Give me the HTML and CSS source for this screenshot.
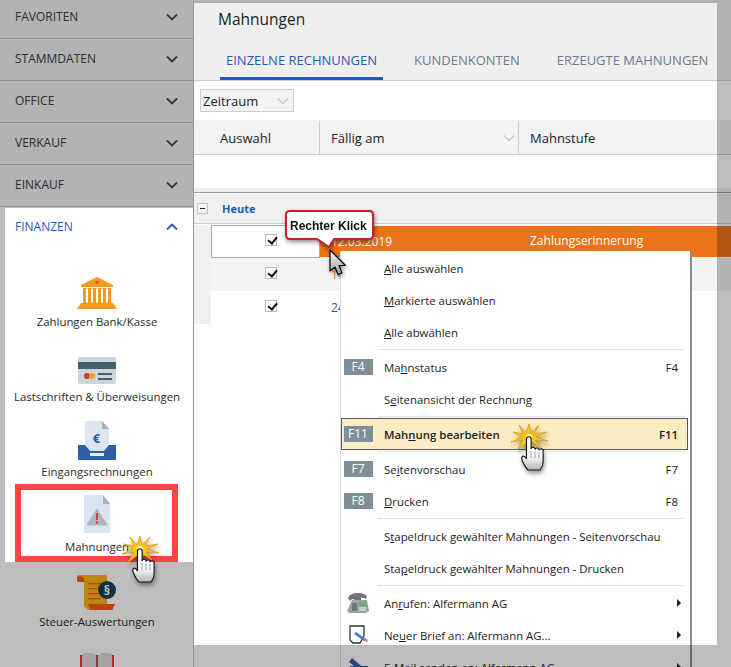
FILE: index.html
```html
<!DOCTYPE html>
<html lang="de">
<head>
<meta charset="utf-8">
<title>Mahnungen</title>
<link rel="stylesheet" href="styles.css">
</head>
<body>
<svg class="defs" width="0" height="0">
  <defs>
    <linearGradient id="handfill" x1="0" y1="0" x2="0" y2="1"><stop offset="0.55" stop-color="#fff"/><stop offset="1" stop-color="#b5b5b5"/></linearGradient>
    <linearGradient id="arrowfill" x1="0" y1="0" x2="0" y2="1"><stop offset="0" stop-color="#fff"/><stop offset="1" stop-color="#999"/></linearGradient>
    <symbol id="hand" viewBox="0 0 40 50">
      <polygon points="18,0 20,9 28,1 23,10 36,8 25,13 37,17 24,16 30,24 21,18 19,27 16,19 6,26 12,16 0,18 11,13 2,8 12,10 8,1 15,9" fill="#f6c51f" stroke="#d99a0e" stroke-width=".7"/>
      <circle cx="18" cy="13" r="3" fill="#fff3b0"/>
      <path d="M15.500 15a2.300 2.300 0 0 1 4.600 0V25a2 2 0 0 1 4 .6a2 2 0 0 1 4 .8a2 2 0 0 1 4 1V38q0 4-3 8H17q-3-3-6-10q-1-3 1-4q2 0 3.500 3Z" fill="url(#handfill)" stroke="#111" stroke-width="1.100"/>
      <path d="M20 27v7M24 27v7M28 28v6" stroke="#777" stroke-width=".7" fill="none"/>
    </symbol>
  </defs>
</svg>
<div class="page">
  <aside class="sidebar">
    <div class="acc"><span>FAVORITEN</span><svg class="chev" viewBox="0 0 12 8"><path d="M1 1.500 6 6.500 11 1.500"/></svg></div>
    <div class="acc"><span>STAMMDATEN</span><svg class="chev" viewBox="0 0 12 8"><path d="M1 1.500 6 6.500 11 1.500"/></svg></div>
    <div class="acc"><span>OFFICE</span><svg class="chev" viewBox="0 0 12 8"><path d="M1 1.500 6 6.500 11 1.500"/></svg></div>
    <div class="acc"><span>VERKAUF</span><svg class="chev" viewBox="0 0 12 8"><path d="M1 1.500 6 6.500 11 1.500"/></svg></div>
    <div class="acc"><span>EINKAUF</span><svg class="chev" viewBox="0 0 12 8"><path d="M1 1.500 6 6.500 11 1.500"/></svg></div>
    <section class="panel">
      <div class="panel-head"><span>FINANZEN</span><svg class="chev up" viewBox="0 0 12 8"><path d="M1 6.500 6 1.500 11 6.500"/></svg></div>
      <div class="tile">
        <svg class="tile-icon" viewBox="0 0 40 42">
          <path d="M20 7 36 15V17H4V15Z" fill="#f49a22"/><circle cx="20" cy="12.500" r="1.800" fill="#e2571e"/>
          <path d="M6 18h28v15H6z" fill="#f49a22"/>
          <path d="M9 18.500h2v14H9zM14 18.500h2v14h-2zM19 18.500h2v14h-2zM24 18.500h2v14h-2zM29 18.500h2v14h-2z" fill="#fff"/>
          <path d="M4 33h32l4 6H0z" fill="#f49a22"/>
        </svg>
        <span class="tile-label">Zahlungen Bank/Kasse</span>
      </div>
      <div class="tile">
        <svg class="tile-icon" viewBox="0 0 40 42">
          <rect x="1" y="12" width="38" height="27" rx="2" fill="#c9d6dc"/>
          <rect x="1" y="17" width="38" height="7" fill="#44616a"/>
          <circle cx="10" cy="31" r="3" fill="#d9341f"/><circle cx="15" cy="31" r="3" fill="#f4a020"/>
          <path d="M21 28h14v2H21zM21 33h14v2H21z" fill="#44616a"/>
        </svg>
        <span class="tile-label">Lastschriften &amp; Überweisungen</span>
      </div>
      <div class="tile">
        <svg class="tile-icon" viewBox="0 0 40 42">
          <path d="M8 1H25L32 8V27L27 31H13L8 27Z" fill="#dde5f0"/>
          <path d="M25 1 32 9H25Z" fill="#a3b3bc"/>
          <text x="19.500" y="23" class="euro">€</text>
          <path d="M1 25H8L13 31H27L32 25H39V40H1Z" fill="#2c5fa8"/>
          <rect x="13" y="33" width="14" height="3" fill="#e8eef5"/>
        </svg>
        <span class="tile-label">Eingangsrechnungen</span>
      </div>
      <div class="tile">
        <svg class="tile-icon" viewBox="0 0 40 42">
          <path d="M7 0H26L33 8V38H7Z" fill="#dbe5f2"/>
          <path d="M26 0 33 9H26Z" fill="#a3b3bc"/>
          <path d="M20 14 30 30H10Z" fill="#aab7c0" stroke="#aab7c0" stroke-linejoin="round"/>
          <path d="M19 18h2v7h-2zM19 26.500h2v2h-2z" fill="#e2323a"/>
        </svg>
        <span class="tile-label">Mahnungen</span>
      </div>
      <div class="tile">
        <svg class="tile-icon" viewBox="0 0 40 42">
          <path d="M0 6q0-1 2-1H28q2 0 2 2V34H38L35 40H11L7 36V12H2Q0 12 0 10Z" fill="#ffb511"/>
          <path d="M11 34H38L35 40H13Z" fill="#f55d10"/>
          <path d="M0 7q4-2 7 1v4H2Q0 12 0 10Z" fill="#f55d10"/>
          <path d="M11 13h13v1.300H11zM11 18h9v1.300h-9zM11 23h10v1.300H11zM11 28h13v1.300H11z" fill="#f55d10"/>
          <circle cx="30" cy="20" r="9" fill="#18415a"/>
          <text x="30" y="24.500" class="para">§</text>
        </svg>
        <span class="tile-label">Steuer-Auswertungen</span>
      </div>
      <div class="tile">
        <svg class="tile-icon" viewBox="0 0 40 42">
          <path d="M3 10H37V40H3Z" fill="#f9303a"/>
          <path d="M5 9q8-3 14 1V38q-6-4-14-1ZM35 9q-8-3-14 1V38q6-4 14-1Z" fill="#dcdcdc"/>
          <path d="M19 10h2v28h-2z" fill="#a55"/>
        </svg>
        <span class="tile-label">Bücher</span>
      </div>
    </section>
  </aside>

  <main class="main">
    <header class="header">
      <h1 class="title">Mahnungen</h1>
      <nav class="tabs">
        <a class="tab active">EINZELNE RECHNUNGEN</a>
        <a class="tab">KUNDENKONTEN</a>
        <a class="tab">ERZEUGTE MAHNUNGEN</a>
      </nav>
    </header>
    <div class="filter">
      <div class="select"><span>Zeitraum</span><svg class="chev light" viewBox="0 0 12 8"><path d="M1 1.500 6 6.500 11 1.500"/></svg></div>
    </div>
    <div class="colhead">
      <div class="col c1">Auswahl</div>
      <div class="col c2"><span>Fällig am</span><svg class="chev light" viewBox="0 0 12 8"><path d="M1 1.500 6 6.500 11 1.500"/></svg></div>
      <div class="col c3">Mahnstufe</div>
    </div>
    <div class="spacer"></div>
    <div class="group">
      <span class="minus"></span><span class="group-name">Heute</span>
    </div>
    <div class="rows">
      <div class="row sel">
        <div class="check-cell"><span class="check"></span></div>
        <div class="date">12.03.2019</div>
        <div class="stage">Zahlungserinnerung</div>
      </div>
      <div class="row alt">
        <div class="check-cell"><span class="check"></span></div>
        <div class="date late">14.03.2019</div>
        <div class="stage"></div>
      </div>
      <div class="row">
        <div class="check-cell"><span class="check"></span></div>
        <div class="date link">24.03.2019</div>
        <div class="stage"></div>
      </div>
    </div>
  </main>

  <div class="menu">
    <div class="item"><span class="gutter"></span><span class="label"><u>A</u>lle auswählen</span></div>
    <div class="item"><span class="gutter"></span><span class="label"><u>M</u>arkierte auswählen</span></div>
    <div class="item"><span class="gutter"></span><span class="label"><u>A</u>lle abwählen</span></div>
    <div class="sep"></div>
    <div class="item"><span class="gutter"><span class="key">F4</span></span><span class="label">Ma<u>h</u>nstatus</span><span class="short">F4</span></div>
    <div class="item"><span class="gutter"></span><span class="label">S<u>e</u>itenansicht der Rechnung</span></div>
    <div class="sep"></div>
    <div class="item hot"><span class="gutter"><span class="key">F11</span></span><span class="label">Mah<u>n</u>ung bearbeiten</span><span class="short">F11</span></div>
    <div class="sep"></div>
    <div class="item"><span class="gutter"><span class="key">F7</span></span><span class="label">Se<u>i</u>tenvorschau</span><span class="short">F7</span></div>
    <div class="item"><span class="gutter"><span class="key">F8</span></span><span class="label"><u>D</u>rucken</span><span class="short">F8</span></div>
    <div class="sep"></div>
    <div class="item"><span class="gutter"></span><span class="label">S<u>t</u>apeldruck gewählter Mahnungen - Seitenvorschau</span></div>
    <div class="item"><span class="gutter"></span><span class="label">Sta<u>p</u>eldruck gewählter Mahnungen - Drucken</span></div>
    <div class="sep"></div>
    <div class="item"><span class="gutter">
      <svg class="mi" viewBox="0 0 24 22"><path d="M1 19 6 8H21L23 19 20 21H3Z" fill="#9aa0a3"/><path d="M2 6q2-5 10-5 6 0 9 3l-1 3q-3-2-5-1v2H8V7Q5 7 4 9Z" fill="#6e7679"/><path d="M13 10h7v4h-7z" fill="#5fb36c"/><path d="M6 11h5v8H6z" fill="#6e7679"/><path d="M13 15h7v4h-7z" fill="#c6cbce"/></svg>
    </span><span class="label">An<u>r</u>ufen: Alfermann AG</span><span class="sub"></span></div>
    <div class="item"><span class="gutter">
      <svg class="mi" viewBox="0 0 24 22"><path d="M4 2H18V12L14 19H7L4 16Z" fill="#fff" stroke="#333" stroke-width="1.300"/><path d="M10 8 20 15 18 17 8 10Z" fill="#3d7fc4"/><path d="M19 14l3 2-1 2-3-1Z" fill="#e5717f"/></svg>
    </span><span class="label">Ne<u>u</u>er Brief an: Alfermann AG...</span><span class="sub"></span></div>
    <div class="item"><span class="gutter">
      <svg class="mi" viewBox="0 0 24 22"><path d="M6 2 20 14 17 17 3 6Z" fill="#3d5f9a"/><path d="M4 10H22V22H4Z" fill="#2c5fa8"/></svg>
    </span><span class="label"><u>E</u>-Mail senden an: Alfermann AG</span><span class="sub"></span></div>
  </div>

  <div class="dim"></div>

  <div class="redbox"></div>

  <div class="callout">
    <svg class="callout-shape" viewBox="0 0 92 42"><path d="M5 1H84Q88 1 88 5V25Q88 29 84 29H49L44 37L32 29H5Q1 29 1 25V5Q1 1 5 1Z" fill="#fff" stroke="#c4202e" stroke-width="2"/></svg>
    <span class="callout-text">Rechter Klick</span>
  </div>
  <svg class="arrow" viewBox="0 0 18 27"><path d="M1 1V22L6 18L9 25.500L13 24L10 16.500H16.500Z" fill="url(#arrowfill)" stroke="#000" stroke-width="1.200" stroke-linejoin="round"/></svg>
  <svg class="hand h1"><use href="#hand"/></svg>
  <svg class="hand h2"><use href="#hand"/></svg>
</div>
</body>
</html>
```
FILE: styles.css
```css
* { box-sizing: border-box; }
html, body { margin: 0; height: 100%; overflow: hidden; background: #fff; }
body { font-family: "Open Sans", "Noto Sans", sans-serif; font-size: 12px; color: #222; }
.defs { position: absolute; }
.page { position: relative; display: flex; width: 731px; height: 667px; overflow: hidden; }

.sidebar { flex: 0 0 194px; margin-top: -3px; height: 670px; border-right: 1px solid #c8c8c8; background: #fff; }
.acc { display: flex; align-items: center; justify-content: space-between; height: 42px; padding: 0 15px 2px; background: #f0f2f4; border-bottom: 1px solid #c4c4c4; color: #404040; font-size: 12px; }
.chev { width: 12px; height: 8px; flex: none; fill: none; stroke: #4a4a4a; stroke-width: 1.800; }
.chev.up { stroke: #1f5cb5; }
.chev.light { stroke: #c9c9c9; stroke-width: 1.400; }

.panel { margin: 1px 0 0 5px; width: 188px; background: #fff; }
.panel-head { display: flex; align-items: center; justify-content: space-between; height: 37px; padding: 0 15px 0 10px; color: #1f5cb5; font-size: 12px; margin-bottom: 10px; }
.tile { display: flex; flex-direction: column; align-items: center; justify-content: flex-end; height: 75px; padding-right: 4px; }
.tile-icon { width: 40px; height: 42px; margin-bottom: 2px; flex: none; }
.tile-label { height: 16px; line-height: 16px; font-size: 11.4px; white-space: nowrap; color: #2a2a2a; }
.euro { font: 700 13px "Open Sans", sans-serif; fill: #2c5fa8; text-anchor: middle; }
.para { font: 700 13px "Open Sans", sans-serif; fill: #fff; text-anchor: middle; }

.main { flex: 1; min-width: 0; background: #fff; }
.header { height: 81px; background: #efefef; border-bottom: 1px solid #cdcdcd; padding: 9px 0 0 24px; display: flex; flex-direction: column; justify-content: space-between; }
.title { margin: 0; font-size: 15.5px; font-weight: 400; line-height: 20px; color: #222; }
.tabs { display: flex; gap: 25px; margin-left: 2px; }
.tab { padding: 0 6px 11px; font-size: 13px; line-height: 17px; color: #6d7a90; white-space: nowrap; }
.tab.active { color: #1f5cb5; border-bottom: 3px solid #1f5cb5; padding-bottom: 8px; }

.filter { height: 39px; padding: 8px 0 0 6px; }
.select { display: flex; align-items: center; justify-content: space-between; width: 94px; height: 23px; padding: 0 4px 0 2px; background: #f3f3f3; border: 1px solid #cfcfcf; font-size: 13px; }

.colhead { display: flex; height: 35px; padding-top: 1px; background: #f3f3f3; border-bottom: 1px solid #cdcdcd; font-size: 13px; color: #222; }
.col { display: flex; align-items: center; border-right: 1px solid #cdcdcd; }
.c1 { width: 126px; padding-left: 26px; }
.c2 { width: 199px; padding: 0 3px 0 11px; justify-content: space-between; }
.c3 { flex: 1; padding-left: 11px; border-right: 0; }

.spacer { height: 37px; background: #fff; border-bottom: 4px solid #eee; }
.group { display: flex; align-items: center; height: 32px; border-top: 1px solid #999; border-bottom: 1px solid #ccc; box-shadow: inset 0 1px 0 #fff; background: #f0f0f0; padding-left: 3px; }
.minus { position: relative; width: 11px; height: 11px; background: #f6f6f6; border: 1px solid #c4c4c4; }
.minus::after { content: ""; position: absolute; left: 2px; right: 2px; top: 4px; height: 1px; background: #222; }
.group-name { margin-left: 14px; color: #1f5cb5; font-size: 11px; font-weight: 700; }

.rows { padding-top: 1px; }
.row { display: flex; height: 33px; background: #fff; padding-left: 17px; box-shadow: inset 17px 0 0 #f0f0f0; }
.row.alt { background: #f3f3f3; }
.check-cell { display: flex; align-items: center; justify-content: center; width: 109px; padding: 0 0 4px 11px; }
.check { position: relative; width: 12px; height: 12px; background: #fff; border: 1px solid #bbb; }
.check::after { content: ""; position: absolute; left: 2px; top: 0; width: 7px; height: 4px; border-left: 2px solid #111; border-bottom: 2px solid #111; transform: rotate(-50deg) translate(-1px, 1px); }
.date { display: flex; align-items: center; width: 199px; padding-left: 11px; }
.stage { display: flex; align-items: center; flex: 1; padding: 0 0 3px 11px; }
.row.sel .check-cell { border: 1px solid #aaa; }
.row.sel .date, .row.sel .stage { background: #ec7318; color: #fff; margin: 1px 0; }
.late { color: #ec7318; }
.link { color: #1f5cb5; }

.menu { position: absolute; left: 340px; top: 251px; width: 352px; height: 440px; padding-top: 1px; background: #fff; border-left: 1px solid #ddd; border-right: 2px solid #8d8d8d; }
.item { display: flex; align-items: center; height: 32px; padding-right: 12px; font-size: 11.4px; color: #1c1c1c; }
.gutter { display: flex; align-items: center; justify-content: center; flex: 0 0 43px; padding-right: 11px; padding-left: 2px; }
.label { flex: 1; white-space: nowrap; }
.short { flex: none; }
.key { display: block; width: 29px; height: 16px; line-height: 16px; text-align: center; background: #7f8f97; color: #fff; font-size: 12px; font-weight: 400; }
.sep { height: 3px; margin: 0 5px 0 37px; background: linear-gradient(#e2e2e2, #e2e2e2) no-repeat 0 1px / 100% 1px; }
.item.hot { margin-right: 2px; background: #fdedc5; outline: 1px solid #55536f; outline-offset: -1px; font-weight: 600; padding-right: 10px; }
.sub { flex: none; width: 0; height: 0; margin-right: -3px; border-left: 4px solid #222; border-top: 4px solid transparent; border-bottom: 4px solid transparent; }
.mi { width: 24px; height: 22px; flex: none; }

.dim { position: absolute; inset: 0; background: rgba(0, 0, 0, .26); clip-path: path(evenodd, "M0 0H731V667H0Z M5 208H193V562H5Z M194 3H717V645H194Z"); }
.redbox { position: absolute; left: 15px; top: 484px; width: 163px; height: 78px; border: 6px solid #fd4548; }

.callout { position: absolute; left: 285px; top: 210px; width: 92px; height: 42px; filter: drop-shadow(1px 2px 2px rgba(0, 0, 0, .45)); }
.callout-shape { position: absolute; inset: 0; width: 92px; height: 42px; }
.callout-text { position: absolute; left: 5px; top: 9px; font: 700 12px "Liberation Sans", Arial, sans-serif; color: #111; white-space: nowrap; }
.arrow { position: absolute; left: 329px; top: 249px; width: 18px; height: 27px; filter: drop-shadow(1px 2px 2px rgba(0, 0, 0, .4)); }
.hand { position: absolute; width: 40px; height: 50px; filter: drop-shadow(1px 3px 2px rgba(0, 0, 0, .4)); }
.h1 { left: 122px; top: 536px; }
.h2 { left: 511px; top: 424px; }
```
